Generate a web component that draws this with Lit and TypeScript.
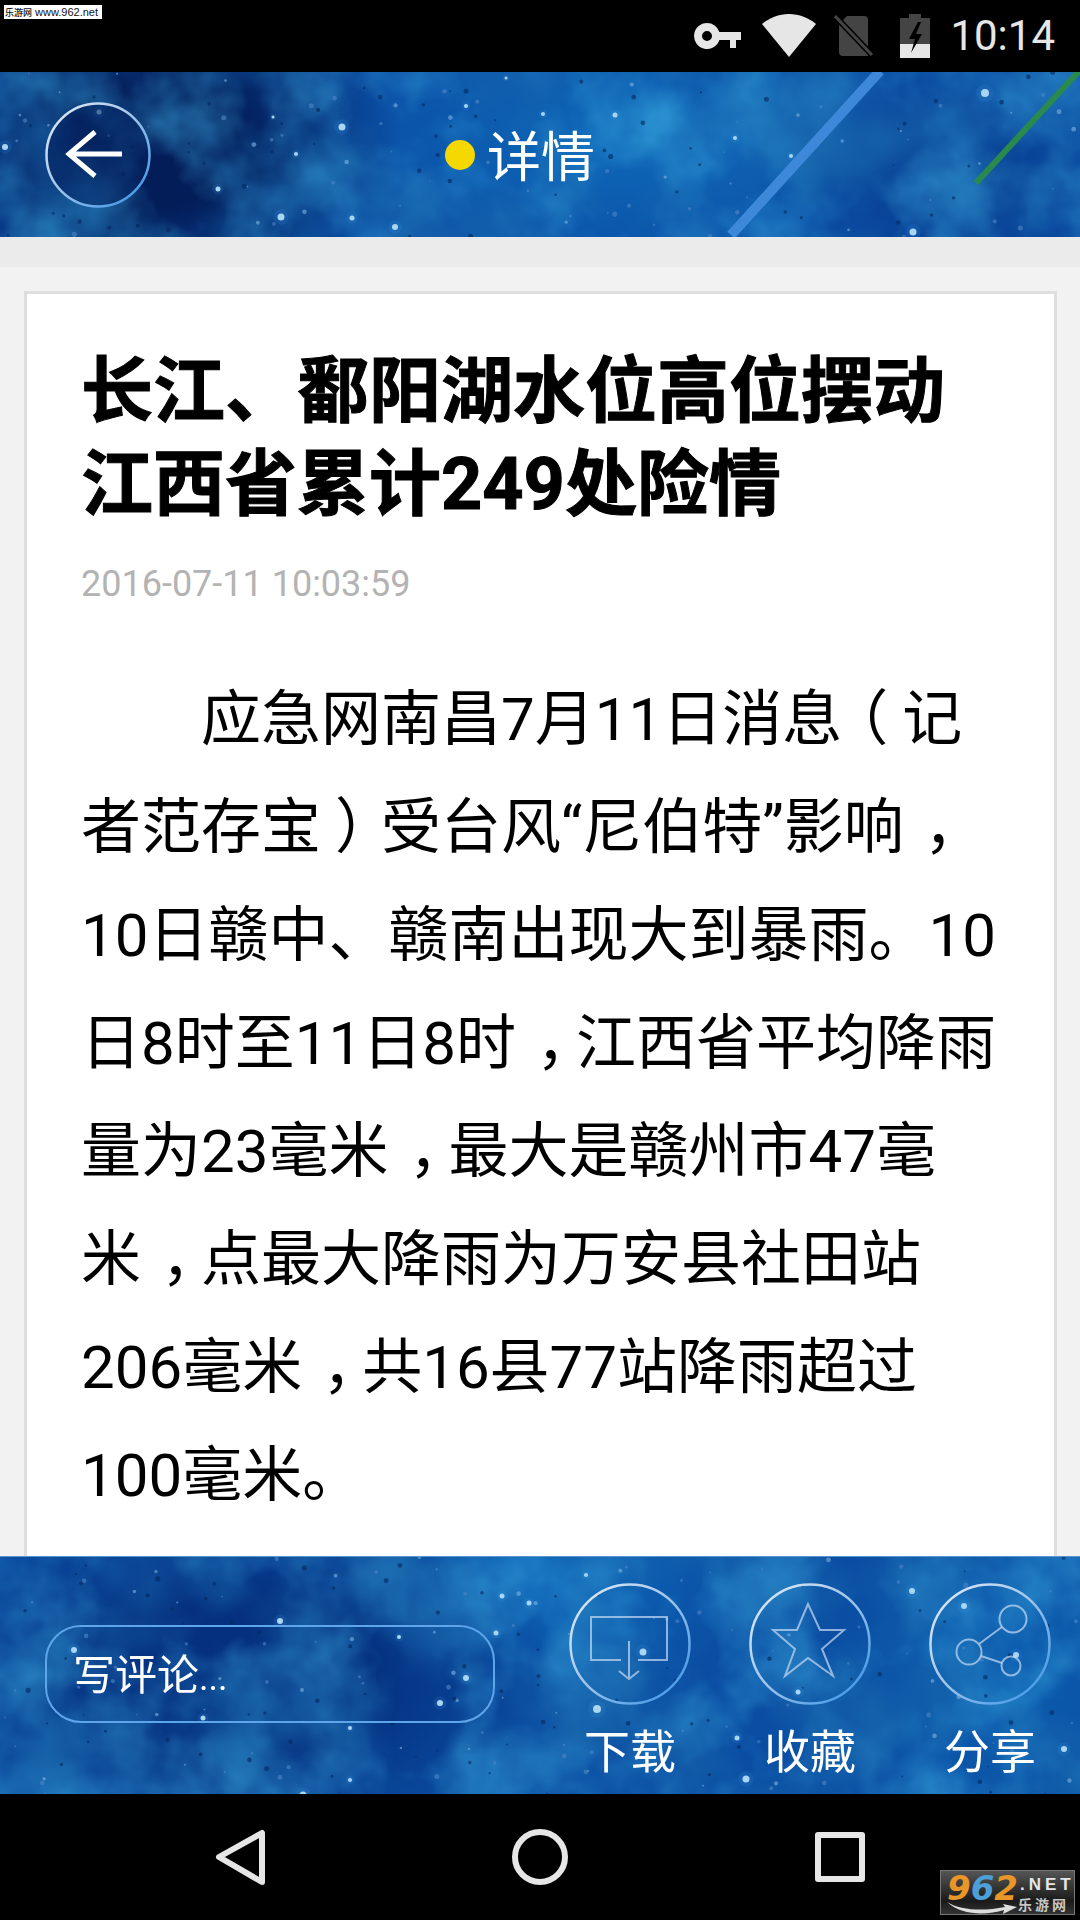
import { html, css, svg, LitElement } from 'lit';
import { customElement, property } from 'lit/decorators.js';

type Star = [number, number, number];

// small seeded generator so the star field stays the same on every render
function rng(seed: number) {
  let s = seed;
  return () => {
    s = (s * 1664525 + 1013904223) % 4294967296;
    return s / 4294967296;
  };
}

@customElement('star-sky')
export class StarSky extends LitElement {
  static styles = css`
    :host {
      position: absolute;
      inset: 0;
      display: block;
      pointer-events: none;
    }
    svg {
      display: block;
    }
    .dots {
      filter: blur(0.7px);
    }
  `;

  @property({ type: Number }) seed = 1;
  @property({ type: Number }) w = 1080;
  @property({ type: Number }) h = 165;
  @property({ type: Number }) count = 90;
  @property({ type: Array }) bright: Star[] = [];

  render() {
    const r = rng(this.seed);
    const dots = [];
    for (let i = 0; i < this.count; i++) {
      const x = r() * this.w;
      const y = r() * this.h;
      const size = 0.8 + r() * 1.8;
      const pick = r();
      const fill = pick < 0.45 ? '#04275f' : pick < 0.8 ? '#4f86c6' : '#7fb2e2';
      dots.push(svg`<circle cx=${x} cy=${y} r=${size} fill=${fill} opacity="0.6"></circle>`);
    }
    return html`<svg width=${this.w} height=${this.h} viewBox="0 0 ${this.w} ${this.h}">
      <defs>
        <filter id="light" x="0" y="0" width="100%" height="100%">
          <feTurbulence type="fractalNoise" baseFrequency="0.011" numOctaves="4" seed=${this.seed}></feTurbulence>
          <feColorMatrix values="0 0 0 0 0.04  0 0 0 0 0.38  0 0 0 0 0.72  1.5 0 0 0 -0.62"></feColorMatrix>
        </filter>
        <filter id="dark" x="0" y="0" width="100%" height="100%">
          <feTurbulence type="fractalNoise" baseFrequency="0.009" numOctaves="3" seed=${this.seed + 40}></feTurbulence>
          <feColorMatrix values="0 0 0 0 0.01  0 0 0 0 0.14  0 0 0 0 0.42  1.7 0 0 0 -0.7"></feColorMatrix>
        </filter>
      </defs>
      <rect width=${this.w} height=${this.h} filter="url(#light)"></rect>
      <rect width=${this.w} height=${this.h} filter="url(#dark)"></rect>
      <g class="dots">
        ${dots}
        ${this.bright.map(
          ([x, y, s]) => svg`
            <circle cx=${x} cy=${y} r=${s * 2.2} fill="#3f9be8" opacity="0.14"></circle>
            <circle cx=${x} cy=${y} r=${s} fill="#a9d6f3"></circle>`
        )}
      </g>
    </svg>`;
  }
}

const TITLE = ['长江、鄱阳湖水位高位摆动', '江西省累计249处险情'];
const BODY = [
  '应急网南昌7月11日消息（记',
  '者范存宝）受台风“尼伯特”影响，',
  '10日赣中、赣南出现大到暴雨。10',
  '日8时至11日8时，江西省平均降雨',
  '量为23毫米，最大是赣州市47毫',
  '米，点最大降雨为万安县社田站',
  '206毫米，共16县77站降雨超过',
  '100毫米。',
];

const HEADER_STARS: Star[] = [
  [5, 147, 3], [99, 112, 2.5], [342, 127, 3.5], [218, 189, 2.5], [273, 117, 1.5], [296, 154, 2],
  [506, 78, 1.5], [466, 106, 2], [615, 115, 2.5], [543, 114, 2], [735, 138, 2], [985, 93, 4],
  [791, 156, 2], [913, 232, 3.5], [395, 227, 3], [281, 217, 3.5], [352, 218, 2.5],
].map(([x, y, s]) => [x, y - 72, s] as Star);

const FOOTER_STARS: Star[] = [
  [74, 1649, 3], [203, 1717, 2.5], [466, 1677, 3], [440, 1702, 3], [399, 1636, 2],
  [502, 1595, 2.5], [529, 1602, 2.5], [280, 1620, 3], [350, 1727, 2], [350, 1779, 2],
  [303, 1794, 3.5], [643, 1651, 3.5], [597, 1708, 4], [798, 1691, 2.5], [912, 1590, 3],
  [964, 1605, 3], [1016, 1654, 3], [1064, 1748, 3], [746, 1778, 3.5], [737, 1737, 2.5],
  [586, 1574, 2], [496, 1632, 2.5],
];

@customElement('app-root')
export class AppRoot extends LitElement {
  static styles = css`
    :host {
      display: block;
      width: 1080px;
      height: 1920px;
      font-family: Roboto, 'Noto Sans CJK SC', sans-serif;
    }
    .page {
      position: relative;
      width: 1080px;
      height: 1920px;
      display: flex;
      flex-direction: column;
      overflow: hidden;
      background: #f2f2f2;
    }

    /* status bar */
    .status {
      height: 72px;
      flex: none;
      background: #000;
      display: flex;
      align-items: center;
      justify-content: flex-end;
      padding-right: 25px;
      color: #e6e6e6;
    }
    .status svg {
      display: block;
    }
    .wifi {
      margin-left: 21px;
      margin-top: -1px;
    }
    .sim {
      margin-left: 18px;
    }
    .battery {
      margin-left: 26px;
    }
    .time {
      margin-left: 20px;
      font-size: 42px;
      line-height: 72px;
    }
    .mark {
      position: absolute;
      left: 4px;
      top: 5px;
      width: 98px;
      height: 14px;
      background: #fff;
      color: #111;
      font: 500 11px/14px 'Liberation Sans', 'Noto Sans CJK SC', sans-serif;
      white-space: nowrap;
      padding-left: 1px;
      box-sizing: border-box;
    }
    .mark span {
      font-size: 9px;
      margin-right: 3px;
    }

    /* header */
    .header {
      position: relative;
      height: 165px;
      flex: none;
      overflow: hidden;
      display: flex;
      align-items: center;
      background:
        radial-gradient(ellipse 280px 130px at 620px 70px, #0e68b8, transparent),
        #0a4fa6;
    }
    .shade {
      position: absolute;
      inset: 0;
      background:
        radial-gradient(ellipse 250px 190px at 150px 70px, rgba(2, 22, 78, 0.88) 35%, transparent),
        radial-gradient(ellipse 190px 130px at 960px 110px, rgba(5, 45, 125, 0.6), transparent);
    }
    .streak {
      position: absolute;
      inset: 0;
    }
    .back {
      position: relative;
      margin-left: 45px;
      display: block;
    }
    .head-title {
      position: absolute;
      left: 445px;
      top: 0;
      height: 165px;
      display: flex;
      align-items: center;
      gap: 12px;
      color: #fff;
      font-size: 54px;
    }
    .dot {
      width: 30px;
      height: 30px;
      border-radius: 50%;
      background: #f5d800;
    }
    .head-title span:last-child {
      margin-top: -3px;
    }

    /* article */
    .main {
      flex: 1;
      min-height: 0;
      display: flex;
      flex-direction: column;
    }
    .strip {
      height: 30px;
      flex: none;
      background: #ebebeb;
    }
    .card {
      flex: 1;
      margin: 24px 23px 0 24px;
      background: #fff;
      border: 3px solid #dedede;
      border-bottom: 0;
      padding: 51px 30px 0 54px;
      color: #000;
    }
    .title {
      font-size: 72px;
      line-height: 93px;
      font-weight: 700;
      white-space: nowrap;
      -webkit-text-stroke: 1px #000;
    }
    .date {
      margin-top: 33px;
      font-size: 36px;
      line-height: 40px;
      color: #b3b3b3;
    }
    .text {
      margin-top: 62px;
      font-size: 60px;
      line-height: 108px;
    }
    .line {
      white-space: pre;
    }
    .indent {
      padding-left: 120px;
    }
    /* the phone font sets these marks in the middle of their cell:
       halt trims the glyph to half a cell, padding fills the rest */
    .comma,
    .open,
    .close {
      font-feature-settings: 'halt';
    }
    .comma {
      padding: 0 10px 0 20px;
    }
    .open {
      padding: 0 14px 0 16px;
    }
    .close {
      padding: 0 16px 0 14px;
    }

    /* footer */
    .footer {
      position: relative;
      height: 238px;
      flex: none;
      overflow: hidden;
      display: flex;
      background:
        radial-gradient(ellipse 200px 130px at 560px 10px, #0e66b8, transparent),
        radial-gradient(ellipse 170px 180px at 1000px 120px, #0b5cae, transparent),
        #0a4ea3;
      border-top: 1px solid #5b93cf;
      box-sizing: border-box;
    }
    .footer .shade {
      background: radial-gradient(ellipse 330px 190px at 230px 120px, rgba(3, 38, 115, 0.75) 40%, transparent);
    }
    .comment {
      position: relative;
      align-self: center;
      margin: -3px 45px 0;
      width: 450px;
      height: 98px;
      box-sizing: border-box;
      border: 2px solid #5ea5ea;
      border-radius: 36px;
      color: #fff;
      font-size: 42px;
      line-height: 98px;
      padding-left: 26px;
    }
    .comment span {
      font-size: 36px;
    }
    .action {
      position: relative;
      width: 180px;
      display: flex;
      flex-direction: column;
      align-items: center;
      padding-top: 26px;
      color: #fff;
      font-size: 46px;
      line-height: 50px;
    }
    .action svg {
      display: block;
      margin-bottom: 22px;
    }
    .glyph {
      stroke-opacity: 0.72;
    }

    /* navigation */
    .nav {
      height: 126px;
      flex: none;
      background: #000;
      display: flex;
      align-items: center;
      justify-content: center;
      gap: 240px;
    }
    .nav svg {
      display: block;
    }
    .logo {
      position: absolute;
      left: 940px;
      top: 1870px;
      width: 135px;
      height: 45px;
      box-sizing: border-box;
      border: 1px solid #777;
      background: linear-gradient(#555, #1a1a1a 70%, #333);
      white-space: nowrap;
    }
    .logo-num {
      position: absolute;
      left: 6px;
      top: -3px;
      font: italic 700 34px/40px 'DejaVu Sans', sans-serif;
      color: #e8962a;
    }
    .logo-num span {
      color: #4d9fd8;
    }
    .logo-net {
      position: absolute;
      left: 79px;
      top: 5px;
      font: 700 17px/18px 'Liberation Sans', sans-serif;
      color: #e6e6e6;
      letter-spacing: 4px;
    }
    .logo-cn {
      position: absolute;
      left: 77px;
      top: 24px;
      font: 700 14px/18px 'Noto Sans CJK SC', sans-serif;
      color: #c8c8c8;
      letter-spacing: 3px;
    }
    .swoosh {
      position: absolute;
      left: 6px;
      top: 30px;
    }
  `;

  private ring(id: string) {
    return svg`<defs>
      <linearGradient id=${id} x1="0" y1="0" x2="1" y2="1">
        <stop offset="0" stop-color="#e8eef7"></stop>
        <stop offset="0.5" stop-color="#9cc3ea"></stop>
        <stop offset="1" stop-color="#2f8fe8"></stop>
      </linearGradient>
    </defs>`;
  }

  private renderLine(line: string) {
    // split on the marks that need their own cell, and keep them
    return line.split(/([，（）])/).map((p) => {
      if (p === '，') return html`<span class="comma">，</span>`;
      if (p === '（') return html`<span class="open">（</span>`;
      if (p === '）') return html`<span class="close">）</span>`;
      return p;
    });
  }

  render() {
    return html`
      <div class="page">
        <div class="status">
          <svg width="47" height="26" viewBox="0 0 47 26">
            <path fill="#e6e6e6" fill-rule="evenodd" d="M13 0a13 13 0 0 1 12.4 9H47v8h-5v8h-6v-8h-10.600a13 13 0 1 1-12.400-17zm0 8a5 5 0 1 0 0 10a5 5 0 0 0 0-10z" />
          </svg>
          <svg class="wifi" width="54" height="44" viewBox="0 0 54 44">
            <path fill="#e6e6e6" d="M27 43L0 10C7 4 17 0 27 0s20 4 27 10z" />
          </svg>
          <svg class="sim" width="40" height="42" viewBox="0 0 40 42">
            <path fill="#444" d="M5 9L13 1h17a4 4 0 0 1 4 4v36H9a4 4 0 0 1-4-4z" />
            <path stroke="#000" stroke-width="6" d="M-1 -1L39 41" />
            <path stroke="#444" stroke-width="3" d="M1 1L38 40" />
          </svg>
          <svg class="battery" width="30" height="44" viewBox="0 0 30 44">
            <path fill="#444" d="M9 0h12v4h9v26H0V4h9z" />
            <path fill="#e6e6e6" d="M0 30h30v14H0z" />
            <path fill="#000" d="M18 8l-9 17h6l-4 14 11-19h-6l5-12z" />
          </svg>
          <span class="time">10:14</span>
        </div>

        <div class="header">
          <div class="shade"></div>
          <star-sky .seed=${7} .w=${1080} .h=${165} .count=${130} .bright=${HEADER_STARS}></star-sky>
          <svg class="streak" width="1080" height="165" viewBox="0 0 1080 165">
            <path d="M880 -1L731 163" stroke="#3e88da" stroke-width="10" fill="none" />
            <path d="M1080 -2L976 111" stroke="#2a8a4e" stroke-width="6" fill="none" />
          </svg>
          <svg class="back" width="106" height="106" viewBox="0 0 106 106">
            ${this.ring('ring-back')}
            <circle cx="53" cy="53" r="51.500" fill="#03215f" fill-opacity="0.55" stroke="url(#ring-back)" stroke-width="2.500" />
            <path d="M25 52H77M50 30L24 52L50 74" fill="none" stroke="#fff" stroke-width="5" />
          </svg>
          <div class="head-title"><span class="dot"></span><span>详情</span></div>
        </div>

        <div class="main">
          <div class="strip"></div>
          <div class="card">
            <div class="title">${TITLE.map((t) => html`<div>${t}</div>`)}</div>
            <div class="date">2016-07-11 10:03:59</div>
            <div class="text">
              ${BODY.map(
                (l, i) => html`<div class="line ${i === 0 ? 'indent' : ''}">${this.renderLine(l)}</div>`
              )}
            </div>
          </div>
        </div>

        <div class="footer">
          <div class="shade"></div>
          <star-sky .seed=${23} .w=${1080} .h=${238} .count=${190} .bright=${FOOTER_STARS.map(
            ([x, y, s]) => [x, y - 1556, s] as Star
          )}></star-sky>
          <div class="comment">写评论<span>...</span></div>
          <div class="action">
            <svg width="122" height="122" viewBox="0 0 122 122" fill="none" stroke="#c3d8f2" stroke-width="2">
              ${this.ring('ring-a')}
              <circle cx="61" cy="61" r="59.500" stroke="url(#ring-a)" stroke-width="2.500" />
              <g class="glyph">
                <path d="M52 77H22V34H98V77H69" />
                <path d="M60 58V95M50 88L60 96L70 88" />
              </g>
            </svg>
            <span>下载</span>
          </div>
          <div class="action">
            <svg width="122" height="122" viewBox="0 0 122 122" fill="none" stroke="#c3d8f2" stroke-width="2">
              ${this.ring('ring-b')}
              <circle cx="61" cy="61" r="59.500" stroke="url(#ring-b)" stroke-width="2.500" />
              <path class="glyph" d="M59 21L48 47H24L46 66L36 93L59 75L84 93L73 66L95 47H71Z" />
            </svg>
            <span>收藏</span>
          </div>
          <div class="action">
            <svg width="122" height="122" viewBox="0 0 122 122" fill="none" stroke="#c3d8f2" stroke-width="2">
              ${this.ring('ring-c')}
              <circle cx="61" cy="61" r="59.500" stroke="url(#ring-c)" stroke-width="2.500" />
              <g class="glyph">
                <circle cx="84" cy="36" r="13.500" />
                <circle cx="40" cy="69" r="12.500" />
                <circle cx="82" cy="83" r="9.500" />
                <path d="M73 44L50 61M52 73L73 80" />
              </g>
            </svg>
            <span>分享</span>
          </div>
        </div>

        <div class="nav">
          <svg width="60" height="60" viewBox="0 0 60 60" fill="none" stroke="#e6e6e6" stroke-width="6" stroke-linejoin="round">
            <path d="M52 6V55L9 30Z" />
          </svg>
          <svg width="60" height="60" viewBox="0 0 60 60" fill="none" stroke="#e6e6e6" stroke-width="6">
            <circle cx="30" cy="30" r="25" />
          </svg>
          <svg width="60" height="60" viewBox="0 0 60 60" fill="none" stroke="#e6e6e6" stroke-width="6" stroke-linejoin="round">
            <rect x="8" y="8" width="44" height="44" />
          </svg>
        </div>

        <div class="mark"><span>乐游网</span>www.962.net</div>
        <div class="logo">
          <svg class="swoosh" width="70" height="16" viewBox="0 0 70 16">
            <path fill="#ddd" d="M0 1C14 10 38 10 58 6L56 3L70 6L56 13L57 9C38 15 14 14 0 1Z" />
          </svg>
          <div class="logo-num">9<span>6</span>2</div>
          <div class="logo-net">.NET</div>
          <div class="logo-cn">乐游网</div>
        </div>
      </div>
    `;
  }
}
